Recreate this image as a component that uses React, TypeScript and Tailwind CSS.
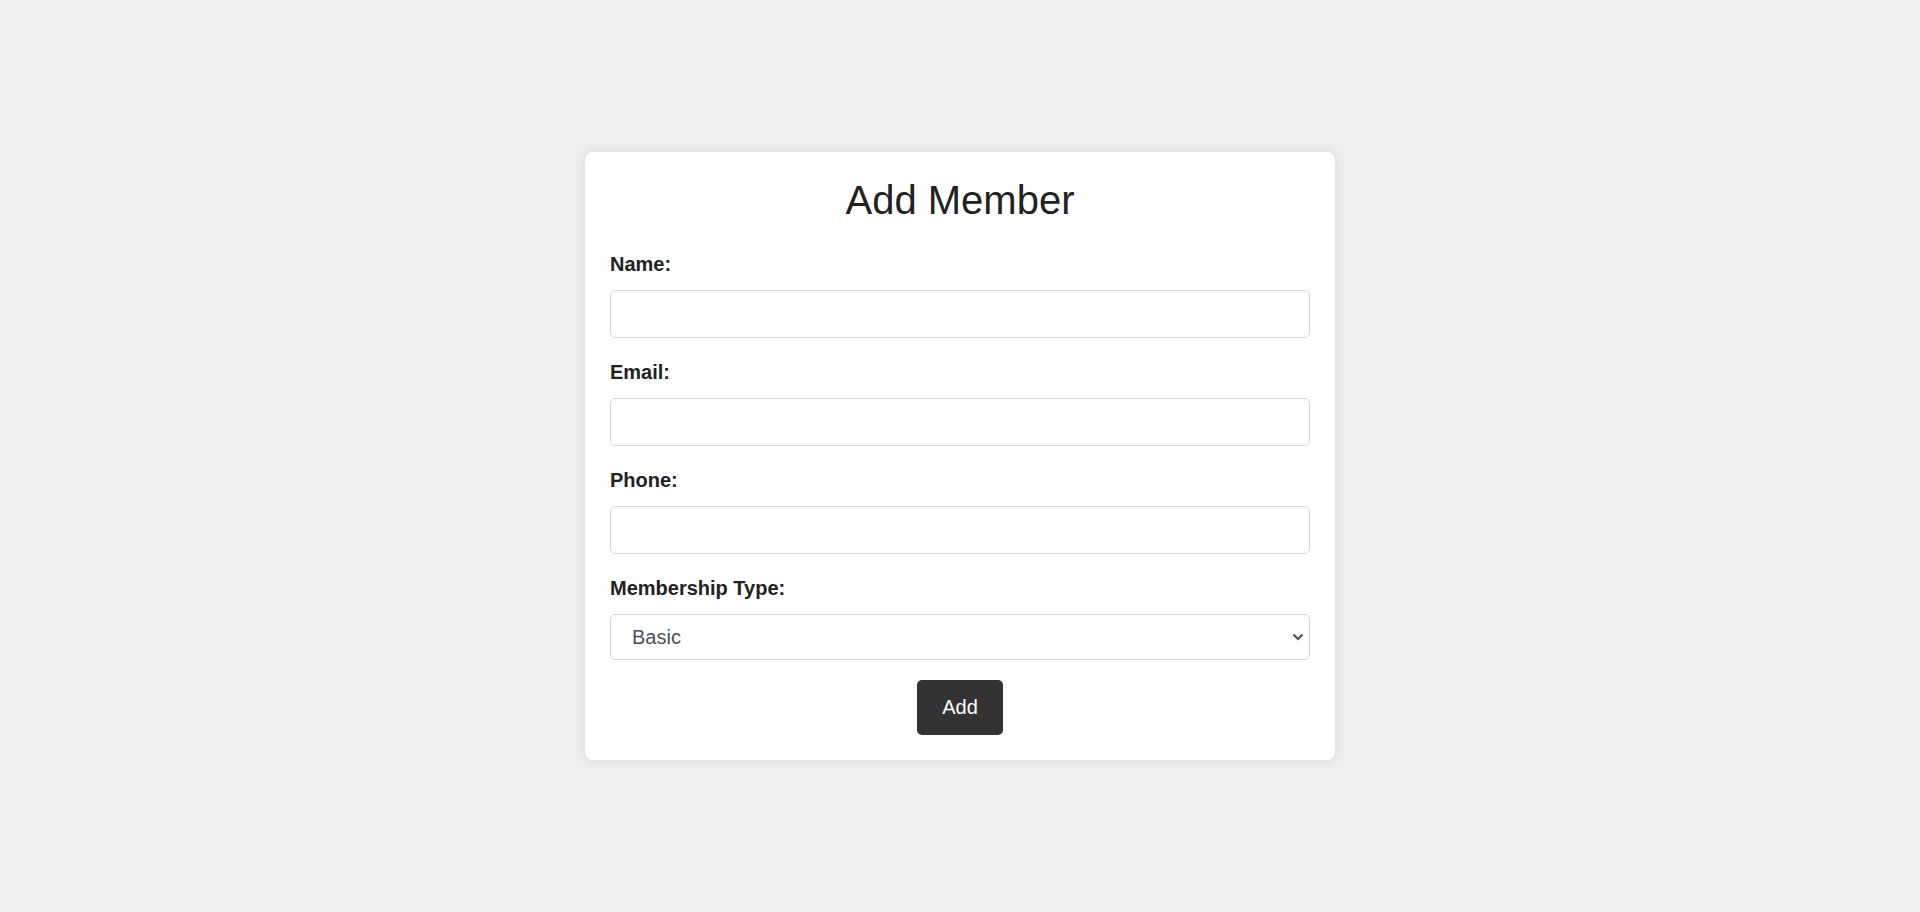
import React, { useState } from 'react';

const fields = [
  { id: 'name', label: 'Name:', type: 'text' },
  { id: 'email', label: 'Email:', type: 'email' },
  { id: 'phone', label: 'Phone:', type: 'tel' },
];

export default function App() {
  const [form, setForm] = useState({
    name: '',
    email: '',
    phone: '',
    membershipType: 'Basic',
  });

  const handleChange = (key: keyof typeof form, value: string) => {
    setForm({ ...form, [key]: value });
  };

  return (
    <div className="flex min-h-screen items-center justify-center bg-[#efefef] font-['Liberation_Sans',Arial,sans-serif] text-[#222]">
      <form
        className="w-[750px] rounded-[8px] bg-white px-[25px] pt-[25px] pb-[25px] shadow-[0_0_12px_rgba(0,0,0,0.1)]"
        onSubmit={(e) => e.preventDefault()}
      >
        <h2 className="text-center text-[40px] leading-[46px]">Add Member</h2>

        <div className="mt-[30px]">
          {fields.map((f) => (
            <div key={f.id} className="mb-[23px]">
              <label htmlFor={f.id} className="block text-[20px] font-bold leading-[23px]">
                {f.label}
              </label>
              <input
                id={f.id}
                type={f.type}
                value={form[f.id as 'name' | 'email' | 'phone']}
                onChange={(e) => handleChange(f.id as 'name', e.target.value)}
                className="mt-[14px] block h-[48px] w-full rounded-[5px] border border-[#cfd3d8] px-[12px] text-[20px] outline-none"
              />
            </div>
          ))}

          <div>
            <label htmlFor="membershipType" className="block text-[20px] font-bold leading-[23px]">
              Membership Type:
            </label>
            <div className="relative mt-[14px]">
              <select
                id="membershipType"
                value={form.membershipType}
                onChange={(e) => handleChange('membershipType', e.target.value)}
                className="block h-[46px] w-full appearance-none rounded-[5px] border border-[#cfd3d8] bg-white pl-[21px] text-[20px] text-[#4a4f55] outline-none"
              >
                <option>Basic</option>
                <option>Premium</option>
                <option>VIP</option>
              </select>
              <svg
                className="pointer-events-none absolute right-[6px] top-[19px]"
                width="12"
                height="8"
                viewBox="0 0 12 8"
                fill="none"
              >
                <path d="M1.5 1.5 L6 6 L10.5 1.5" stroke="#4a4f55" strokeWidth="2.2" />
              </svg>
            </div>
          </div>
        </div>

        <div className="mt-[20px] flex justify-center">
          <button
            type="submit"
            className="rounded-[5px] bg-[#333] px-[25px] py-[16px] text-[20px] leading-[23px] text-white"
          >
            Add
          </button>
        </div>
      </form>
    </div>
  );
}
